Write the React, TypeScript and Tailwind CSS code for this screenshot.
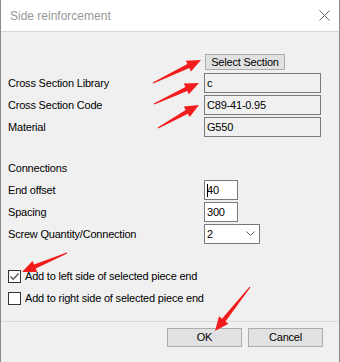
import React from "react";

type Pt = [number, number];

// tapered red arrow, drawn from tail to tip
function arrowPoints(tail: Pt, tip: Pt) {
  const dx = tip[0] - tail[0];
  const dy = tip[1] - tail[1];
  const len = Math.hypot(dx, dy);
  const ux = dx / len;
  const uy = dy / len;
  const nx = -uy;
  const ny = ux;
  const headLen = 14;
  const headW = 6;
  const shaftW = 2.2;
  const bx = tip[0] - ux * headLen;
  const by = tip[1] - uy * headLen;
  const pts: Pt[] = [
    [tail[0] + nx * 0.6, tail[1] + ny * 0.6],
    [bx + nx * shaftW, by + ny * shaftW],
    [bx + nx * headW, by + ny * headW],
    tip,
    [bx - nx * headW, by - ny * headW],
    [bx - nx * shaftW, by - ny * shaftW],
    [tail[0] - nx * 0.6, tail[1] - ny * 0.6],
  ];
  return pts.map((p) => p.join(",")).join(" ");
}

const arrows: [Pt, Pt][] = [
  [[152, 83], [200, 60]],
  [[153, 104], [198, 83]],
  [[157, 128], [198, 105]],
  [[66, 253], [21, 272]],
  [[249, 287], [214, 331]],
];

function Field({ label, value, readOnly = false }: { label: string; value: string; readOnly?: boolean }) {
  return (
    <div className="flex items-center h-[20px] mt-[2px]">
      <div className="w-[196px]">{label}</div>
      <div
        className={`w-[117px] h-[20px] border border-[#7a7a7a] pl-[2px] flex items-center ${
          readOnly ? "bg-[#f0f0f0]" : "bg-white"
        }`}
      >
        {value}
      </div>
    </div>
  );
}

function SmallField({ label, value, caret = false }: { label: string; value: string; caret?: boolean }) {
  return (
    <div className="flex items-center h-[20px] mt-[2px]">
      <div className="w-[196px]">{label}</div>
      <div className="relative w-[34px] h-[20px] border border-[#7a7a7a] bg-white pl-[2px] flex items-center">
        {caret && <span className="absolute left-[2px] top-[3px] w-px h-[13px] bg-black" />}
        {value}
      </div>
    </div>
  );
}

function Check({ label, checked }: { label: string; checked?: boolean }) {
  return (
    <div className="flex items-center gap-[4px] h-[13px]">
      <div className="w-[13px] h-[13px] border border-[#333] bg-white flex items-center justify-center">
        {checked && (
          <svg width="11" height="11" viewBox="0 0 11 11">
            <path d="M1.5 5.5 L4.2 8.2 L9.5 2.5" fill="none" stroke="#555" strokeWidth="1.4" />
          </svg>
        )}
      </div>
      <span>{label}</span>
    </div>
  );
}

export default function App() {
  return (
    <div className="relative w-[340px] h-[362px] bg-[#f0f0f0] text-[11px] tracking-[-0.2px] text-black font-['Liberation_Sans',Arial,sans-serif] border-x border-[#8c8c8c] overflow-hidden">
      <div className="h-[32px] bg-white border-b border-[#d6d6d6] flex items-center justify-between pl-[9px] pr-[9px]">
        <span className="text-[12px] tracking-normal text-[#999]">Side reinforcement</span>
        <svg width="11" height="11" viewBox="0 0 11 11">
          <path d="M0.5 0.5 L10.5 10.5 M10.5 0.5 L0.5 10.5" stroke="#666" strokeWidth="1" />
        </svg>
      </div>

      <div className="pl-[7px]">
        <div className="flex mt-[22px]">
          <div className="w-[197px]" />
          <button className="w-[80px] h-[16px] bg-[#e1e1e1] border border-[#adadad] flex items-center justify-center leading-none">
            Select Section
          </button>
        </div>
        <div className="mt-[3px]">
          <Field label="Cross Section Library" value="c" readOnly />
          <Field label="Cross Section Code" value="C89-41-0.95" readOnly />
          <Field label="Material" value="G550" readOnly />
        </div>

        <div className="h-[20px] flex items-center mt-[21px]">Connections</div>
        <div className="mt-[1px]">
          <SmallField label="End offset" value="40" caret />
          <SmallField label="Spacing" value="300" />
          <div className="flex items-center h-[20px] mt-[2px]">
            <div className="w-[196px]">Screw Quantity/Connection</div>
            <div className="w-[56px] h-[20px] border border-[#7a7a7a] bg-white pl-[2px] pr-[4px] flex items-center justify-between">
              <span>2</span>
              <svg width="9" height="6" viewBox="0 0 9 6">
                <path d="M0.5 0.5 L4.5 4.5 L8.5 0.5" fill="none" stroke="#555" strokeWidth="1" />
              </svg>
            </div>
          </div>
        </div>

        <div className="mt-[26px]">
          <Check label="Add to left side of selected piece end" checked />
        </div>
        <div className="mt-[9px]">
          <Check label="Add to right side of selected piece end" />
        </div>
      </div>

      <div className="mt-[16px] border-t border-[#dadada]" />
      <div className="flex justify-end gap-[6px] pr-[16px] mt-[6px]">
        <button className="w-[75px] h-[19px] bg-[#e1e1e1] border border-[#adadad] leading-none">OK</button>
        <button className="w-[75px] h-[19px] bg-[#e1e1e1] border border-[#adadad] leading-none">Cancel</button>
      </div>

      <svg className="absolute left-0 top-0 pointer-events-none" width="340" height="362">
        {arrows.map(([a, b], i) => (
          <polygon key={i} points={arrowPoints(a, b)} fill="#f21c1c" />
        ))}
      </svg>
    </div>
  );
}
